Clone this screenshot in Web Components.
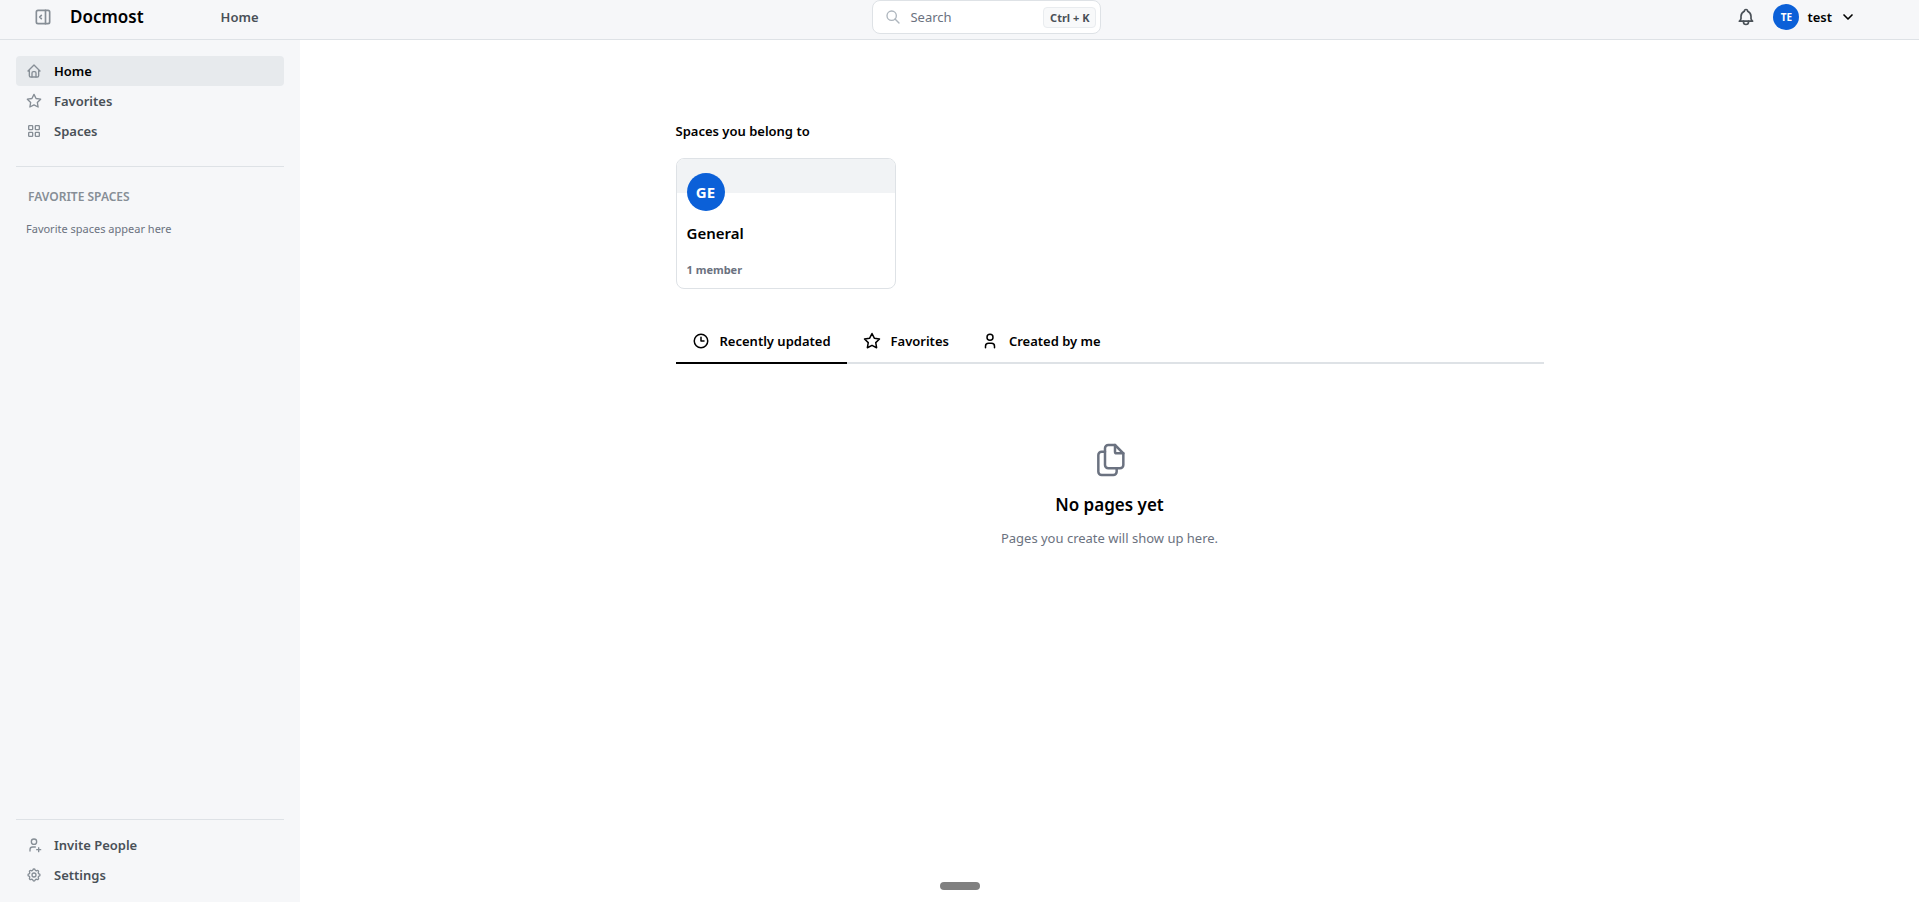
<!DOCTYPE html>
<html lang="en">
<head>
<meta charset="utf-8">
<meta name="viewport" content="width=device-width, initial-scale=1">
<title>Home - Docmost</title>
<style>
  :root {
    --surface: #f6f7f9;
    --border: #dee2e6;
    --ink: #000;
    --nav: #495057;
    --muted: #868e96;
    --dim: #6b7280;
    --primary: #0b60d8;
    --medium: 600;
  }
  body { margin: 0; background: #fff; color: var(--ink); font: 400 13px/20px "Noto Sans", "Open Sans", sans-serif; }
</style>
</head>
<body>
<doc-app></doc-app>
<script>
const ICONS = {
  panel: '<path d="M4 6a2 2 0 0 1 2-2h12a2 2 0 0 1 2 2v12a2 2 0 0 1-2 2H6a2 2 0 0 1-2-2z"/><path d="M15 4v16"/><path d="M10 10l-2 2l2 2"/>',
  home: '<path d="M5 12H3l9-9l9 9h-2"/><path d="M5 12v7a2 2 0 0 0 2 2h10a2 2 0 0 0 2-2v-7"/><path d="M9 21v-6a2 2 0 0 1 2-2h2a2 2 0 0 1 2 2v6"/>',
  star: '<path d="M12 17.75l-6.172 3.245l1.179-6.873l-5-4.867l6.9-1l3.086-6.253l3.086 6.253l6.9 1l-5 4.867l1.179 6.873z"/>',
  grid: '<rect x="4" y="4" width="6" height="6" rx="1"/><rect x="14" y="4" width="6" height="6" rx="1"/><rect x="4" y="14" width="6" height="6" rx="1"/><rect x="14" y="14" width="6" height="6" rx="1"/>',
  userPlus: '<path d="M8 7a4 4 0 1 0 8 0a4 4 0 0 0-8 0"/><path d="M16 19h6"/><path d="M19 16v6"/><path d="M6 21v-2a4 4 0 0 1 4-4h4"/>',
  user: '<path d="M8 7a4 4 0 1 0 8 0a4 4 0 0 0-8 0"/><path d="M6 21v-2a4 4 0 0 1 4-4h4a4 4 0 0 1 4 4v2"/>',
  settings: '<path d="M10.325 4.317c.426-1.756 2.924-1.756 3.35 0a1.724 1.724 0 0 0 2.573 1.066c1.543-.94 3.31.826 2.37 2.37a1.724 1.724 0 0 0 1.065 2.572c1.756.426 1.756 2.924 0 3.35a1.724 1.724 0 0 0-1.066 2.573c.94 1.543-.826 3.31-2.37 2.37a1.724 1.724 0 0 0-2.572 1.065c-.426 1.756-2.924 1.756-3.35 0a1.724 1.724 0 0 0-2.573-1.066c-1.543.94-3.31-.826-2.37-2.37a1.724 1.724 0 0 0-1.065-2.572c-1.756-.426-1.756-2.924 0-3.35a1.724 1.724 0 0 0 1.066-2.573c-.94-1.543.826-3.31 2.37-2.37c1 .608 2.296.07 2.572-1.065z"/><path d="M9 12a3 3 0 1 0 6 0a3 3 0 0 0-6 0"/>',
  search: '<path d="M3 10a7 7 0 1 0 14 0a7 7 0 1 0-14 0"/><path d="M21 21l-6-6"/>',
  bell: '<path d="M10 5a2 2 0 1 1 4 0a7 7 0 0 1 4 6v3a4 4 0 0 0 2 3H4a4 4 0 0 0 2-3v-3a7 7 0 0 1 4-6"/><path d="M9 17v1a3 3 0 0 0 6 0v-1"/>',
  chevron: '<path d="M6 9l6 6l6-6"/>',
  clock: '<path d="M3 12a9 9 0 1 0 18 0a9 9 0 0 0-18 0"/><path d="M12 7v5h4"/>',
  files: '<path d="M15 3v4a1 1 0 0 0 1 1h4"/><path d="M18 17h-7a2 2 0 0 1-2-2V5a2 2 0 0 1 2-2h4l5 5v7a2 2 0 0 1-2 2z"/><path d="M16 17v2a2 2 0 0 1-2 2H7a2 2 0 0 1-2-2V9a2 2 0 0 1 2-2h2"/>'
};

const define = (name, markup, setup) => {
  const template = document.createElement('template');
  template.innerHTML = markup;
  customElements.define(name, class extends HTMLElement {
    constructor() {
      super();
      this.attachShadow({ mode: 'open' }).append(template.content.cloneNode(true));
    }
    connectedCallback() { if (setup) setup(this, this.shadowRoot); }
  });
};

define('doc-icon', `
  <style>
    :host { display: block; flex: none; width: var(--size, 16px); height: var(--size, 16px); }
    svg { display: block; width: 100%; height: 100%; fill: none; stroke: currentColor; stroke-linecap: round; stroke-linejoin: round; }
  </style>
  <svg viewBox="0 0 24 24" aria-hidden="true"></svg>`,
  (el, root) => {
    const svg = root.querySelector('svg');
    svg.innerHTML = ICONS[el.getAttribute('name')];
    svg.setAttribute('stroke-width', el.getAttribute('stroke') || '2');
  });

define('doc-avatar', `
  <style>
    :host { display: grid; place-items: center; flex: none; width: 38px; height: 38px; border-radius: 50%; background: var(--primary); color: #fff; font-size: 15px; line-height: 20px; font-weight: 700; }
    :host([small]) { width: 26px; height: 26px; font-size: 10px; }
  </style>
  <slot></slot>`);

define('doc-nav-link', `
  <style>
    :host { display: block; }
    a { display: flex; align-items: center; gap: 12px; height: 30px; padding: 0 10px; border-radius: 4px; color: var(--nav); font-weight: var(--medium); text-decoration: none; }
    doc-icon { color: var(--muted); }
    :host([active]) a { background: #e7eaed; color: var(--ink); }
  </style>
  <a href="#"><doc-icon></doc-icon><slot></slot></a>`,
  (el, root) => {
    const icon = document.createElement('doc-icon');
    icon.setAttribute('name', el.getAttribute('icon'));
    root.querySelector('doc-icon').replaceWith(icon);
    if (el.hasAttribute('active')) root.querySelector('a').setAttribute('aria-current', 'page');
  });

define('doc-header', `
  <style>
    :host { display: flex; justify-content: space-between; align-items: center; box-sizing: border-box; height: 40px; padding: 0 63px 5px 33px; border-bottom: 1px solid var(--border); background: var(--surface); }
    div { display: flex; align-items: center; }
    button { display: flex; align-items: center; padding: 0; border: 0; background: none; color: inherit; font: inherit; }
    a { color: inherit; text-decoration: none; }
    .toggle { --size: 20px; color: var(--muted); }
    .brand { margin-left: 17px; font-size: 17px; line-height: 24px; font-weight: var(--medium); }
    .home { margin-left: 77px; color: var(--nav); font-weight: var(--medium); }
    .search { box-sizing: border-box; width: 229px; height: 34px; padding: 0 4px 0 12px; border: 1px solid var(--border); border-radius: 8px; background: #fff; color: var(--dim); }
    .search doc-icon { color: #adb5bd; }
    .search span { flex: 1; margin-left: 9px; text-align: left; }
    kbd { padding: 0 6px; border: 1px solid #e9ecef; border-radius: 4px; background: #f8f9fa; color: var(--nav); font: 700 11px/19px "Noto Sans", "Open Sans", sans-serif; }
    .account { padding-left: 21px; }
    .bell { --size: 20px; color: var(--nav); }
    .user { gap: 8px; margin-left: 17px; font-weight: var(--medium); }
  </style>
  <div>
    <button class="toggle" aria-label="Toggle sidebar"><doc-icon name="panel"></doc-icon></button>
    <a class="brand" href="#">Docmost</a>
    <a class="home" href="#">Home</a>
  </div>
  <button class="search"><doc-icon name="search"></doc-icon><span>Search</span><kbd>Ctrl + K</kbd></button>
  <div class="account">
    <button class="bell" aria-label="Notifications"><doc-icon name="bell"></doc-icon></button>
    <button class="user"><doc-avatar small>TE</doc-avatar>test<doc-icon name="chevron" stroke="2.5"></doc-icon></button>
  </div>`);

define('doc-sidebar', `
  <style>
    :host { display: flex; flex-direction: column; box-sizing: border-box; width: 300px; padding: 16px 16px 12px; background: var(--surface); }
    hr { width: 100%; margin: 0; border: 0; border-top: 1px solid var(--border); }
    nav + hr { margin-top: 20px; }
    h2 { margin: 20px 12px 0; color: var(--muted); font-size: 12px; line-height: 20px; font-weight: var(--medium); text-transform: uppercase; }
    p { margin: 12px 10px auto; color: var(--dim); font-size: 11px; }
    .foot { margin-top: 10px; }
  </style>
  <nav aria-label="Main">
    <doc-nav-link icon="home" active>Home</doc-nav-link>
    <doc-nav-link icon="star">Favorites</doc-nav-link>
    <doc-nav-link icon="grid">Spaces</doc-nav-link>
  </nav>
  <hr>
  <h2>Favorite spaces</h2>
  <p>Favorite spaces appear here</p>
  <hr>
  <nav class="foot" aria-label="Workspace">
    <doc-nav-link icon="userPlus">Invite People</doc-nav-link>
    <doc-nav-link icon="settings">Settings</doc-nav-link>
  </nav>`);

define('doc-space-card', `
  <style>
    :host { display: block; width: 220px; }
    a { display: block; border: 1px solid var(--border); border-radius: 8px; overflow: hidden; color: inherit; text-decoration: none; }
    .cover { height: 34px; background: #f1f3f5; }
    .body { padding: 0 10px 8px; }
    doc-avatar { margin-top: -20px; }
    strong { display: block; margin-top: 10px; font-size: 15px; line-height: 24px; font-weight: var(--medium); }
    small { display: block; margin-top: 15px; color: var(--dim); font-size: 11px; line-height: 20px; font-weight: 700; }
  </style>
  <a href="#">
    <div class="cover"></div>
    <div class="body">
      <doc-avatar><slot name="initials"></slot></doc-avatar>
      <strong><slot></slot></strong>
      <small><slot name="members"></slot></small>
    </div>
  </a>`);

define('doc-tab', `
  <style>
    :host { display: block; margin-bottom: -2px; }
    button { --size: 18px; display: flex; align-items: center; gap: 10px; height: 44px; padding: 0 16px; border: 0; border-bottom: 2px solid transparent; background: none; color: inherit; font: inherit; font-weight: var(--medium); white-space: nowrap; }
    :host([selected]) button { border-color: var(--ink); }
  </style>
  <button role="tab"><doc-icon></doc-icon><slot></slot></button>`,
  (el, root) => {
    const icon = document.createElement('doc-icon');
    icon.setAttribute('name', el.getAttribute('icon'));
    root.querySelector('doc-icon').replaceWith(icon);
    root.querySelector('button').setAttribute('aria-selected', el.hasAttribute('selected'));
  });

define('doc-empty', `
  <style>
    :host { display: flex; flex-direction: column; align-items: center; text-align: center; }
    doc-icon { --size: 40px; color: var(--dim); }
    h3 { margin: 13px 0 11px; font-size: 17px; line-height: 24px; font-weight: var(--medium); }
    p { margin: 0; color: var(--dim); }
  </style>
  <doc-icon name="files" stroke="1.5"></doc-icon>
  <h3><slot name="title"></slot></h3>
  <p><slot></slot></p>`);

define('doc-home', `
  <style>
    :host { display: block; box-sizing: border-box; width: 100%; max-width: 900px; margin: 0 auto; padding: 81px 16px 48px; }
    h1 { margin: 0 0 17px; font-size: 13px; line-height: 20px; font-weight: var(--medium); }
    .tabs { display: flex; margin-top: 31px; border-bottom: 2px solid var(--border); }
    doc-empty { margin-top: 76px; }
  </style>
  <h1>Spaces you belong to</h1>
  <doc-space-card><span slot="initials">GE</span>General<span slot="members">1 member</span></doc-space-card>
  <div class="tabs" role="tablist">
    <doc-tab icon="clock" selected>Recently updated</doc-tab>
    <doc-tab icon="star">Favorites</doc-tab>
    <doc-tab icon="user">Created by me</doc-tab>
  </div>
  <doc-empty><span slot="title">No pages yet</span>Pages you create will show up here.</doc-empty>`);

define('doc-app', `
  <style>
    :host { display: grid; grid-template: auto 1fr / auto 1fr; min-height: 100vh; }
    doc-header { grid-column: 1 / -1; }
    .handle { position: fixed; left: 50%; bottom: 12px; width: 40px; height: 8px; margin-left: -20px; border-radius: 4px; background: #808080; }
  </style>
  <doc-header></doc-header>
  <doc-sidebar></doc-sidebar>
  <main><doc-home></doc-home></main>
  <div class="handle"></div>`);
</script>
</body>
</html>
